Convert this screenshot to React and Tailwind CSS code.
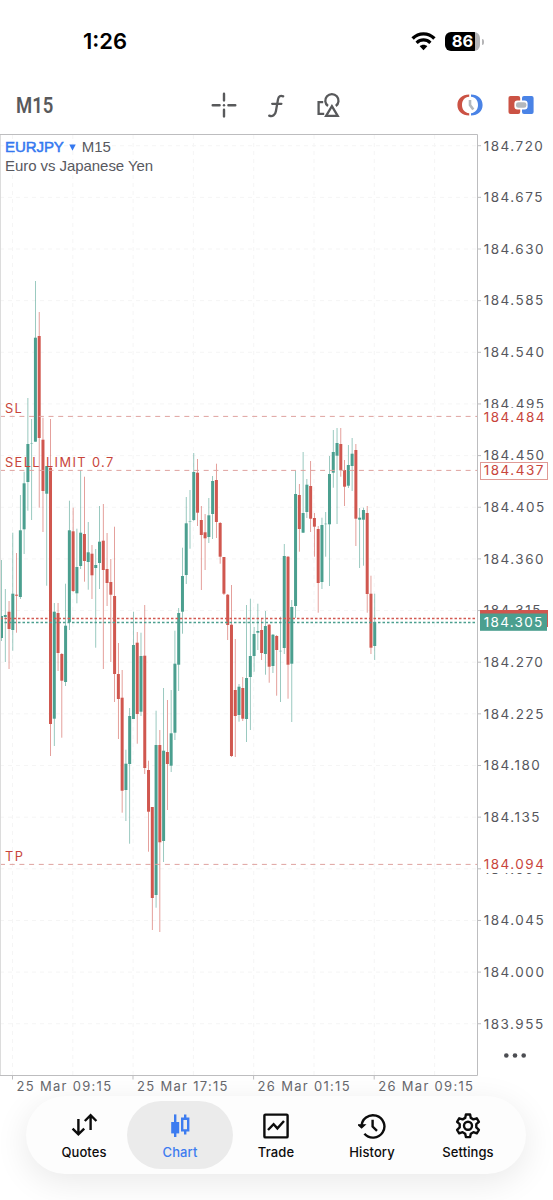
import React, { useState } from "react";

const UP = "#4b9f8f";
const DOWN = "#d0574f";
const STEP = 3.77;

// [direction, high, body top, body bottom, low]
const candles = [
  ["u", 560, 616, 638, 641],
  ["u", 589, 615, 617, 662],
  ["d", 601, 611.7, 629, 669],
  ["u", 532.7, 593.7, 630, 650.7],
  ["d", 553, 594.7, 595.7, 632.7],
  ["u", 495, 530.3, 597, 599],
  ["u", 471.7, 483.3, 529.3, 554],
  ["u", 398, 444, 482, 510.7],
  ["u", 419, 443, 443.7, 520],
  ["u", 281, 337.7, 441.7, 441.7],
  ["d", 312, 336, 438, 507.7],
  ["d", 417.7, 439.7, 491, 532],
  ["u", 466, 466, 493.7, 585.7],
  ["d", 419, 467.7, 724, 756],
  ["u", 603, 611.7, 718.7, 746],
  ["d", 603, 613, 653, 671],
  ["d", 653, 654, 680.7, 737.7],
  ["u", 583.7, 625.7, 682, 686],
  ["u", 500.7, 530.3, 622.3, 630],
  ["d", 507.7, 531.3, 591, 592],
  ["u", 528.7, 567, 593.3, 603.3],
  ["u", 470, 532.7, 566, 569],
  ["d", 476.7, 534, 561, 581.7],
  ["u", 522, 552.3, 562, 589.7],
  ["d", 545, 553.7, 575.3, 599],
  ["u", 549, 565, 568, 647.7],
  ["u", 506, 541.7, 563, 589],
  ["d", 504, 540.7, 570, 669],
  ["d", 533, 569, 583, 606],
  ["d", 559, 582, 594.7, 662],
  ["d", 526.7, 596, 674, 702],
  ["d", 643, 674, 699, 739],
  ["d", 670, 697.7, 790.7, 812.7],
  ["u", 749.7, 763.7, 790, 821],
  ["u", 708, 716, 764, 843.7],
  ["u", 611.7, 645, 719, 719],
  ["d", 632, 642.7, 714, 743.7],
  ["u", 632.7, 656, 711.7, 716],
  ["d", 605, 655.7, 768, 774],
  ["d", 760.7, 770, 811.7, 851.7],
  ["d", 807, 807, 898, 930],
  ["u", 710.7, 745, 895, 907.7],
  ["d", 730, 745, 842.3, 932],
  ["u", 688, 750.7, 841, 862],
  ["d", 700, 752, 764, 810],
  ["u", 690, 733.3, 765.7, 772],
  ["u", 630.7, 663.7, 732.7, 740],
  ["u", 608, 613, 664.7, 691],
  ["u", 547.7, 576, 611.7, 633.7],
  ["u", 497, 523.3, 575, 584],
  ["u", 490, 521, 521.8, 548.7],
  ["u", 453, 472, 520, 521],
  ["d", 459, 472.7, 512.7, 526],
  ["d", 506, 520, 535, 590],
  ["d", 514, 532.3, 538.3, 570],
  ["u", 498, 515.3, 537, 543],
  ["u", 476, 481, 514, 539],
  ["d", 463.7, 480, 522, 538],
  ["d", 522, 523, 556.7, 563.7],
  ["d", 557, 557, 593.7, 595],
  ["d", 594, 594.7, 625, 640],
  ["d", 585, 624.7, 756, 757],
  ["d", 639, 690, 716, 757],
  ["u", 684, 686.7, 715, 721.7],
  ["d", 677, 688, 718.7, 721],
  ["u", 605, 678, 719, 742],
  ["u", 598.7, 656, 677, 730],
  ["u", 627, 634, 656, 671.7],
  ["u", 603.7, 631, 632.7, 650],
  ["d", 618, 630, 653, 660],
  ["u", 611, 626, 654, 674.7],
  ["d", 624, 624.7, 666.7, 682.7],
  ["u", 634, 634.7, 666, 673],
  ["d", 635, 636, 650, 695.7],
  ["u", 616.7, 650.7, 651.5, 702],
  ["u", 544, 556, 648, 654],
  ["d", 556, 556.7, 664.7, 698.7],
  ["u", 600, 607, 663.7, 722],
  ["u", 470.7, 494, 606, 618],
  ["d", 484, 495, 529, 551.7],
  ["u", 452, 513, 532.7, 533],
  ["u", 479, 484.7, 512, 518],
  ["d", 461, 486, 518.7, 532],
  ["d", 513, 518, 526.7, 556.7],
  ["d", 526, 529, 583, 612.7],
  ["u", 517.7, 525, 582, 589],
  ["u", 512, 523.5, 524.3, 556.7],
  ["u", 456, 474, 524.3, 586],
  ["u", 430, 452, 472.7, 487.7],
  ["u", 428, 443, 455.7, 524],
  ["d", 428, 444, 470, 476.7],
  ["d", 460, 470, 486.7, 506],
  ["u", 445, 465, 485.7, 488],
  ["u", 438, 453.7, 466, 491],
  ["d", 444, 450, 518.7, 546],
  ["u", 508, 517.7, 519.7, 568],
  ["u", 507.7, 510, 519.7, 565.7],
  ["d", 506, 513, 594, 612.7],
  ["d", 575.7, 593.7, 647.7, 654],
  ["u", 593.7, 622, 646, 660],
];

const prices = Array.from({ length: 18 }, (_, i) => ({
  label: (184.72 - i * 0.045).toFixed(3),
  y: 145.7 + i * 51.65,
}));

const dates = [
  { label: "25 Mar 09:15", x: 12.5 },
  { label: "25 Mar 17:15", x: 133 },
  { label: "26 Mar 01:15", x: 253.6 },
  { label: "26 Mar 09:15", x: 374.2 },
];

const orders = [
  { label: "SL", y: 416.4 },
  { label: "SELL LIMIT 0.7", y: 470.4 },
  { label: "TP", y: 864.4 },
];

function PriceChart() {
  return (
    <svg
      width="553"
      height="962"
      viewBox="0 134 553 962"
      className="block font-[Inter,sans-serif] text-[13.5px]"
    >
      {/* grid */}
      <g stroke="#f5f5f5" strokeDasharray="4 4">
        {prices.map((p) => (
          <line key={p.label} x1="0" x2="477" y1={p.y} y2={p.y} />
        ))}
        {[0, 1, 2, 3, 4, 5, 6, 7].map((i) => (
          <line
            key={i}
            x1={12.5 + i * 60.3}
            x2={12.5 + i * 60.3}
            y1="135"
            y2="1075"
          />
        ))}
      </g>

      {/* candles */}
      {candles.map(([dir, high, top, bottom, low], i) => {
        const x = 1.5 + i * STEP;
        const color = dir === "u" ? UP : DOWN;
        return (
          <g key={i} fill={color}>
            <rect x={x - 0.4} y={high} width="0.8" height={low - high} opacity="0.7" />
            <rect
              x={x - 1.5}
              y={top}
              width="3"
              height={bottom - top}
              opacity={bottom - top < 1 ? 0.5 : 1}
            />
          </g>
        );
      })}

      {/* pending order levels */}
      {orders.map((o) => (
        <g key={o.label}>
          <line x1="0" x2="477" y1={o.y} y2={o.y} stroke="#dfa39f" strokeDasharray="5 4.7" />
          <text x="5" y={o.y - 3.9} fill="#c8453b" fontSize="12.8" letterSpacing="1.4">
            {o.label}
          </text>
        </g>
      ))}

      {/* ask / bid */}
      <line x1="0" x2="477" y1="618.5" y2="618.5" stroke="#d25a52" strokeWidth="1.5" strokeDasharray="2.5 2" />
      <line x1="0" x2="477" y1="622.4" y2="622.4" stroke="#4b9f8f" strokeWidth="1.5" strokeDasharray="2.5 2" />

      {/* frame */}
      <path d="M0.5 134V1075" stroke="#dcdcdc" fill="none" />
      <path d="M0 134.5H477.5V1075.5H0" stroke="#bdbdbf" fill="none" />

      {/* price axis */}
      <g letterSpacing="1.5">
        <g fill="#56575d">
          {prices.map((p) => (
            <g key={p.label}>
              <line x1="478" x2="481" y1={p.y} y2={p.y} stroke="#bdbdbf" />
              <text x="483.7" y={p.y + 4.8}>
                {p.label}
              </text>
            </g>
          ))}
        </g>
        <rect x="482" y="408" width="71" height="15" fill="#fff" />
        <text x="483.7" y="421.5" fill="#c8453b">184.484</text>
        <rect x="480.5" y="462.5" width="67" height="17" fill="#fff" stroke="#e09a95" />
        <text x="483.7" y="475.4" fill="#c8453b">184.437</text>
        <rect x="480" y="610" width="68" height="17" fill="#d0574f" />
        <rect x="480" y="613.5" width="67" height="17.3" fill="#4b9f8f" />
        <text x="483.7" y="627" fill="#fff" letterSpacing="1.3">184.305</text>
        <rect x="482" y="856" width="71" height="17" fill="#fff" />
        <text x="483.7" y="869.3" fill="#c8453b">184.094</text>
      </g>

      {/* more */}
      <g fill="#4c4d52">
        <circle cx="506.3" cy="1055.5" r="2.3" />
        <circle cx="515" cy="1055.5" r="2.3" />
        <circle cx="523.7" cy="1055.5" r="2.3" />
      </g>

      {/* time axis */}
      {dates.map((d) => (
        <g key={d.label}>
          <line x1={d.x} x2={d.x} y1="1076" y2="1079.5" stroke="#bdbdbf" />
          <text x={d.x + 4} y="1091" fill="#66676c" fontSize="13" letterSpacing="1.3">
            {d.label}
          </text>
        </g>
      ))}
    </svg>
  );
}

function StatusBar() {
  return (
    <div className="flex h-[76px] items-end justify-between pr-[69px] pl-[83px]">
      <span className="mb-[19px] font-[Inter,sans-serif] text-[22px] leading-[32px] font-semibold text-black">
        1:26
      </span>
      <div className="mb-[25px] flex items-center gap-[9px]">
        <svg width="25" height="19" viewBox="0 0 25 19" fill="none" stroke="#000">
          <path d="M1.6 6.5C7.8 0.3 17.2 0.3 23.4 6.5" strokeWidth="3.4" />
          <path d="M5.6 10.8C9.6 7 15.4 7 19.4 10.8" strokeWidth="3.2" />
          <path d="M8.7 14.3C10.9 12.3 14.1 12.3 16.3 14.3L12.5 18.2Z" fill="#000" stroke="none" />
        </svg>
        <div className="flex items-center gap-[2px]">
          <div className="flex h-[19px] w-[35px] items-center justify-center overflow-hidden rounded-[6px] bg-linear-to-r from-black from-87% to-[#b5b5b7] to-87% font-[Inter,sans-serif] text-[16.5px] font-bold text-white">
            86
          </div>
          <div className="h-[6px] w-[2px] rounded-r-full bg-[#b5b5b7]" />
        </div>
      </div>
    </div>
  );
}

function Toolbar() {
  return (
    <div className="flex h-[58px] items-center pr-[19px] pl-[16px]">
      <button className="w-[195px] origin-left scale-x-[0.84] text-left font-[Roboto,sans-serif] text-[22px] font-semibold text-[#58595b]">
        M15
      </button>
      <svg width="26" height="26" viewBox="0 0 26 26" fill="none" stroke="#58595b" strokeWidth="2.4" strokeLinecap="round">
        <path d="M13 1.8V8.4M13 17.8V24.4M1.7 13.2H8.6M17.4 13.2H24.3" />
        <circle cx="13" cy="13.2" r="1.2" fill="#58595b" stroke="none" />
      </svg>
      <svg width="18" height="26" viewBox="0 0 18 26" className="ml-[30px]" fill="none" stroke="#58595b" strokeWidth="2.3" strokeLinecap="round">
        <path d="M16.2 4.4C13.4 3.2 11.6 4.2 11 7.4L8.9 19.2C8.3 22.8 5.6 25 2.2 23.6M5.2 11.8H14.4" />
      </svg>
      <svg width="24" height="26" viewBox="0 0 24 26" className="ml-[31px]" fill="none" stroke="#58595b" strokeWidth="2.3">
        <path d="M7.2 10.2H2.6V21.8H8.2" />
        <path d="M12 14A6.6 6.6 0 1 1 19.8 14" />
        <path d="M15.9 14.2L21.7 23.9H10.1Z" />
      </svg>
      <svg width="26" height="22" viewBox="0 0 26 22" className="ml-auto">
        <path d="M12.2 0.6V2.8C7.6 3.2 5 6.6 5 11S7.6 18.8 12.2 19.2V21.4C5 21.4 0.4 17.2 0.4 11S5 0.6 12.2 0.6Z" fill="#cb5244" />
        <path d="M14 0.6V2.8C18.4 3.2 21 6.6 21 11S18.4 18.8 14 19.2V21.4C21 21.4 25.6 17.2 25.6 11S21 0.6 14 0.6Z" fill="#4a83e6" />
        <path d="M13 6V11L16.3 15.6" fill="none" stroke="#b3b8bd" strokeWidth="2.6" />
      </svg>
      <svg width="26" height="18" viewBox="0 0 26 18" className="ml-[25px]">
        <rect x="0.5" width="11.7" height="18" rx="2" fill="#cb5244" />
        <rect x="14" width="11.6" height="18" rx="2" fill="#4a83e6" />
        <rect x="6.4" y="4.4" width="13.2" height="9.2" rx="3" fill="#fff" />
        <rect x="8" y="6.2" width="10.4" height="5.6" rx="2.4" fill="#b3b8bd" />
      </svg>
    </div>
  );
}

const iconProps = {
  width: 28,
  height: 28,
  viewBox: "0 0 28 28",
  fill: "none",
  stroke: "currentColor",
  strokeWidth: 2.4,
};

const tabs = [
  {
    name: "Quotes",
    icon: (
      <svg {...iconProps}>
        <path d="M8.4 8V23M2.6 17.6L8.4 23.4L14.2 17.6M20.6 19V4.2M14.8 10L20.6 4.2L26.4 10" />
      </svg>
    ),
  },
  {
    name: "Chart",
    icon: (
      <svg {...iconProps}>
        <path d="M9.2 3.4V26" />
        <path d="M5.2 11H13.2V22.4H5.2Z" fill="currentColor" stroke="none" />
        <path d="M19.2 3.4V7.6M19.2 19.6V23.6" />
        <path d="M16.2 7.8H22.2V19.4H16.2Z" />
      </svg>
    ),
  },
  {
    name: "Trade",
    icon: (
      <svg {...iconProps}>
        <rect x="2.4" y="3.6" width="23.2" height="22.8" rx="1" />
        <path d="M6 19L11.6 13.2L15.4 17.4L22 10" />
      </svg>
    ),
  },
  {
    name: "History",
    icon: (
      <svg {...iconProps}>
        <path d="M3.6 15.6A11.4 11.2 0 1 1 6.4 22.8" />
        <path d="M0.2 13.8L3.6 17L7 13.8Z" fill="currentColor" strokeWidth="1.2" />
        <path d="M14.6 8.8V15.6L19 19.8" />
      </svg>
    ),
  },
  {
    name: "Settings",
    icon: (
      <svg {...iconProps} strokeLinejoin="round">
        <path d="M11.9 3.5H16.1L16.8 6.9L19.4 8.4L22.8 7.3L24.9 10.8L22.3 13.2V16.4L24.9 18.8L22.8 22.3L19.4 21.2L16.8 22.7L16.1 26.1H11.9L11.2 22.7L8.6 21.2L5.2 22.3L3.1 18.8L5.7 16.4V13.2L3.1 10.8L5.2 7.3L8.6 8.4L11.2 6.9Z" />
        <circle cx="14" cy="14.8" r="4" />
      </svg>
    ),
  },
];

export default function App() {
  const [active, setActive] = useState("Chart");

  return (
    <div className="flex h-[1200px] w-[553px] flex-col overflow-hidden bg-white">
      <StatusBar />
      <Toolbar />
      <div className="relative">
        <PriceChart />
        {/* symbol caption over the plot */}
        <div className="absolute top-[3px] left-[5px] font-['Liberation_Sans',sans-serif] text-[15px] leading-[19px] tracking-[-0.06px] text-[#58595f]">
          <div className="flex items-center">
            <span className="text-[#3478f0] [-webkit-text-stroke:0.5px]">EURJPY</span>
            <svg width="7" height="7" viewBox="0 0 7 7" className="mt-[2px] mr-[6px] ml-[5px]">
              <path d="M0.3 0.5H6.7L3.5 6.8Z" fill="#3478f0" />
            </svg>
            <span>M15</span>
          </div>
          <div>Euro vs Japanese Yen</div>
        </div>
      </div>
      <nav className="mr-[27px] ml-[26px] flex h-[78px] shrink-0 items-center justify-center rounded-full bg-[#fdfdfd] shadow-[0_8px_34px_rgba(0,0,0,0.09)]">
        {tabs.map((tab) => (
          <button
            key={tab.name}
            onClick={() => setActive(tab.name)}
            className={`-mx-[5px] flex h-[68px] w-[106px] flex-col items-center rounded-full pt-[10px] font-[Inter,sans-serif] text-[13px] font-medium tracking-[0.1px] ${
              active === tab.name ? "bg-[#ebebeb] text-[#3d7cf0]" : "text-[#0c0c0c]"
            }`}
          >
            {tab.icon}
            <span className="mt-[4px] leading-[18px]">{tab.name}</span>
          </button>
        ))}
      </nav>
    </div>
  );
}
